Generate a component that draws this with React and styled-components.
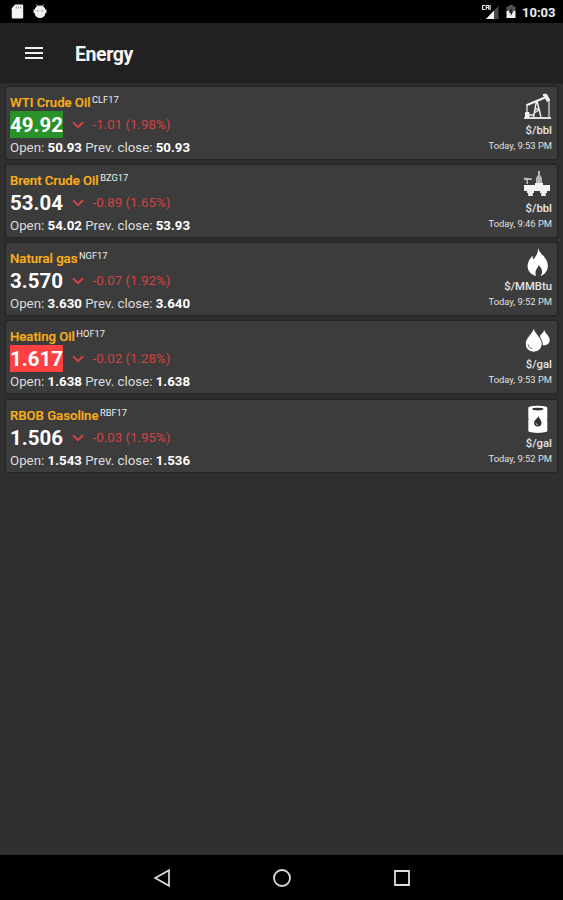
import React from 'react';
import styled, { createGlobalStyle } from 'styled-components';

const GlobalStyle = createGlobalStyle`
  * { box-sizing: border-box; }
  body { margin: 0; background: #303030; font-family: Roboto, "Noto Sans", sans-serif; }
`;

const Screen = styled.div`
  display: flex;
  flex-direction: column;
  height: 900px;
  background: #303030;
  color: #fff;
  overflow: hidden;
`;

const StatusBar = styled.header`
  display: flex;
  align-items: center;
  height: 23px;
  flex: none;
  padding: 0 7px 0 10px;
  background: #000;
`;

const StatusIcon = styled.svg`
  display: block;
  flex: none;
  margin-left: ${(p) => p.$gap || 0}px;
`;

const Clock = styled.time`
  margin-left: 6px;
  width: 34px;
  font-size: 13px;
  font-weight: 700;
  line-height: 23px;
  padding-top: 2px;
  white-space: nowrap;
  color: #eee;
`;

const Spacer = styled.div`
  flex: 1;
`;

const AppBar = styled.nav`
  display: flex;
  align-items: center;
  gap: 32px;
  height: 61px;
  flex: none;
  padding-left: 25px;
  background: #212121;
  border-bottom: 1px solid #272727;
`;

const MenuIcon = styled.svg`
  display: block;
  margin-top: -1px;
`;

const Title = styled.h1`
  margin: 2px 0 0;
  font-size: 19.5px;
  font-weight: 700;
  letter-spacing: -0.4px;
  color: #f5f5f5;
`;

const List = styled.main`
  flex: 1;
  display: flex;
  flex-direction: column;
  gap: 6.25px;
  padding: 2.6px 6px 0;
`;

const Card = styled.article`
  display: flex;
  justify-content: space-between;
  height: 72px;
  padding: 0 5px 0 4px;
  background: #3c3c3c;
  border-radius: 2px;
  box-shadow: 0 0 2px 1px rgba(0, 0, 0, 0.3);
`;

const Quote = styled.div`
  display: flex;
  flex-direction: column;
  white-space: nowrap;
`;

const NameRow = styled.div`
  display: flex;
  height: 24px;
  padding-top: 7px;
`;

const Name = styled.span`
  font-size: 13.2px;
  line-height: 17px;
  font-weight: 500;
  letter-spacing: -0.03px;
  color: #f9af18;
  -webkit-text-stroke: 0.2px #f9af18;
`;

const Symbol = styled.span`
  margin: -1px 0 0 1.5px;
  font-size: 9.3px;
  line-height: 13px;
  color: #f0f0f0;
`;

const PriceRow = styled.div`
  display: flex;
  align-items: center;
  height: 27px;
`;

const priceColors = { up: '#2a9129', down: '#fb4141' };

const Price = styled.span`
  width: 53px;
  height: 27px;
  padding-top: 1px;
  font-size: 20.5px;
  line-height: 27px;
  font-weight: 700;
  background: ${(p) => priceColors[p.$flash] || 'transparent'};
`;

const Chevron = styled.svg`
  margin: 1px 8.5px 0 9px;
`;

const Change = styled.span`
  font-size: 13.35px;
  color: #d14343;
`;

const Session = styled.div`
  padding-top: 1px;
  font-size: 13.3px;
  line-height: 18px;
  color: #dedede;

  b {
    font-weight: 700;
    color: #fff;
  }
`;

const Meta = styled.div`
  display: flex;
  flex-direction: column;
  align-items: flex-end;
  white-space: nowrap;
`;

const CommodityIcon = styled.svg`
  display: block;
  margin: 5px 0 0;
  flex: none;
`;

const Unit = styled.span`
  height: 15px;
  margin-top: 1px;
  font-size: 11.3px;
  line-height: 15px;
  font-weight: 500;
  color: #e6e6e6;
`;

const Stamp = styled.span`
  margin-top: 1px;
  font-size: 9.4px;
  line-height: 14px;
  color: #e0e0e0;
`;

const NavBar = styled.footer`
  display: flex;
  align-items: center;
  justify-content: center;
  gap: 100px;
  height: 45px;
  flex: none;
  background: #000;
`;

const PumpJack = () => (
  <g fill="none" stroke="#f2f2f2" strokeWidth="1.4">
    <path d="M2 26H29" strokeWidth="1.8" />
    <path d="M4.5 13.2L23 5.5" strokeWidth="2.2" />
    <path d="M21 2.5L24.3 2L27.8 8L25.3 9.5Z" fill="#f2f2f2" strokeWidth="1" />
    <path d="M27 8V25" strokeWidth="1.1" />
    <path d="M14.5 9L11.5 25M15 9L19 25M12.5 17H17M12 21L18 17.5" />
    <path d="M5 13V20" strokeWidth="1.2" />
    <path d="M3.5 20.5H7V25H3.5Z" fill="#f2f2f2" strokeWidth="1" />
    <path d="M7 23H12" />
  </g>
);

const Platform = () => (
  <g fill="#f2f2f2">
    <path d="M2 15H28V21H2Z" />
    <path d="M5 21H12V23H10.8V26H6.2V23H5ZM18 21H25V23H23.8V26H19.2V23H18Z" />
    <path d="M16 1H18V5L20 8V14H14V8L16 5Z" fill="#b5b5b5" />
    <path d="M2 7.5L10 8.5V10H2ZM4.5 9H6V14H4.5Z" fill="#b9b9b9" />
    <path d="M13 13H21V15H13Z" />
  </g>
);

const Flame = () => (
  <path
    fill="#fff"
    transform="translate(1 -.5)"
    d="M15 0C15.8 5 20 7 22.8 11.5C27.5 19 23.5 27 17.5 28.5C20.5 24.5 18.8 21 15.7 17.5C15.8 20 11 22 13 28.5C5.5 26.5 2.5 19.5 6 13C7.2 10.8 8.7 9.6 9 8C9.7 9 10 10.5 10 12C13.4 8.6 15.4 5 15 0Z"
  />
);

const Drops = () => (
  <g fill="#fff" transform="translate(.7 -.3)">
    <path d="M21.5 4C22.5 8 27 10 27 14.5A5.4 5.4 0 0 1 17.5 17.7C18.5 13 17 10.5 17.5 9.5C19.3 8 20.8 6.5 21.5 4Z" />
    <path
      d="M11 2C12.5 8 19.5 12 19.5 18.3A8.5 8.2 0 0 1 2.5 18.3C2.5 12 9.5 8 11 2Z"
      stroke="#3c3c3c"
      strokeWidth="1"
    />
    <path d="M5.2 18.5Q6 22.5 9.5 23.3" fill="none" stroke="#777" strokeWidth="1" />
  </g>
);

const Barrel = () => (
  <g transform="translate(.8 -.2)">
    <path
      fill="#fff"
      d="M5.5 3C5.5 .2 24.5 .2 24.5 3V26C24.5 28.8 5.5 28.8 5.5 26Z"
    />
    <path d="M5 13.5L6 14.5L5 15.5ZM25 13.5L24 14.5L25 15.5Z" fill="#3c3c3c" />
    <ellipse cx="15" cy="4.3" rx="5.8" ry="1.4" fill="#333" />
    <path d="M15.5 11C15.8 13.5 18.7 15 18.7 18A3.7 3.8 0 0 1 11.3 18C11.3 15 15 14 15.5 11Z" fill="#303030" />
    <path d="M13 18Q13.5 20.3 15.3 20.3" fill="none" stroke="#ddd" strokeWidth=".8" />
  </g>
);

const commodities = [
  { name: 'WTI Crude Oil', symbol: 'CLF17', price: '49.92', change: '-1.01 (1.98%)', open: '50.93', close: '50.93', unit: '$/bbl', time: '9:53 PM', flash: 'up', Icon: PumpJack },
  { name: 'Brent Crude Oil', symbol: 'BZG17', price: '53.04', change: '-0.89 (1.65%)', open: '54.02', close: '53.93', unit: '$/bbl', time: '9:46 PM', Icon: Platform },
  { name: 'Natural gas', symbol: 'NGF17', price: '3.570', change: '-0.07 (1.92%)', open: '3.630', close: '3.640', unit: '$/MMBtu', time: '9:52 PM', Icon: Flame },
  { name: 'Heating Oil', symbol: 'HOF17', price: '1.617', change: '-0.02 (1.28%)', open: '1.638', close: '1.638', unit: '$/gal', time: '9:53 PM', flash: 'down', Icon: Drops },
  { name: 'RBOB Gasoline', symbol: 'RBF17', price: '1.506', change: '-0.03 (1.95%)', open: '1.543', close: '1.536', unit: '$/gal', time: '9:52 PM', Icon: Barrel },
];

const CommodityCard = ({ item }) => (
  <Card>
    <Quote>
      <NameRow>
        <Name>{item.name}</Name>
        <Symbol>{item.symbol}</Symbol>
      </NameRow>
      <PriceRow>
        <Price $flash={item.flash}>{item.price}</Price>
        <Chevron width="12" height="8" viewBox="0 0 12 8">
          <path d="M1 1.2L6 6.2L11 1.2" fill="none" stroke="#d14343" strokeWidth="2" />
        </Chevron>
        <Change>{item.change}</Change>
      </PriceRow>
      <Session>
        Open: <b>{item.open}</b> Prev. close: <b>{item.close}</b>
      </Session>
    </Quote>
    <Meta>
      <CommodityIcon width="30" height="30" viewBox="0 0 30 30">
        <item.Icon />
      </CommodityIcon>
      <Unit>{item.unit}</Unit>
      <Stamp>Today, {item.time}</Stamp>
    </Meta>
  </Card>
);

export default function App() {
  return (
    <Screen>
      <GlobalStyle />
      <StatusBar>
        <StatusIcon width="14" height="15" viewBox="0 0 14 15">
          <path d="M5 .5H12Q13.2 .5 13.2 1.7V13.3Q13.2 14.5 12 14.5H3Q1.8 14.5 1.8 13.3V4.3Z" fill="#f2f2f2" />
          <path d="M6.3 2.3V4.5M8.5 2.3V4.5M10.7 2.3V4.5" stroke="#999" strokeWidth="1.1" />
        </StatusIcon>
        <StatusIcon $gap={9} width="14" height="15" viewBox="0 0 14 15">
          <path d="M3.5 .5L5 3M10.5 .5L9 3" stroke="#ddd" strokeWidth="1" />
          <path d="M1.5 6.5A5.5 5 0 0 1 12.5 6.5V8.5A5.5 5.5 0 0 1 1.5 8.5ZM.5 5.5H1.5V9H.5ZM12.5 5.5H13.5V9H12.5Z" fill="#eee" />
          <path d="M4 7H5.7M8.3 7H10" stroke="#888" strokeWidth="1.2" />
        </StatusIcon>
        <Spacer />
        <StatusIcon width="18" height="16" viewBox="0 0 18 16">
          <path d="M17.5 2V15H5Z" fill="#4a4a4a" />
          <path d="M13 6.5V15H5Z" fill="#f2f2f2" />
          <path d="M4 1.5H1.6V5.5H4M5.2 5.8V1.5H7.5V3.5H5.2M7.7 3.5V5.8M9.2 1V6" fill="none" stroke="#ddd" strokeWidth="1.2" />
        </StatusIcon>
        <StatusIcon $gap={7} width="10" height="15" viewBox="0 0 10 15">
          <path d="M3 1H7V2.5H9.5V7H.5V2.5H3Z" fill="#555" />
          <path d="M.5 7H9.5V14H.5Z" fill="#f2f2f2" />
          <path d="M5.5 4L2.8 8.8H4.7V12L7.4 7.3H5.5Z" fill="#111" />
        </StatusIcon>
        <Clock>10:03</Clock>
      </StatusBar>
      <AppBar>
        <MenuIcon width="18" height="14" viewBox="0 0 18 14">
          <path d="M0 2H18M0 7H18M0 12H18" stroke="#f2f2f2" strokeWidth="2" />
        </MenuIcon>
        <Title>Energy</Title>
      </AppBar>
      <List>
        {commodities.map((item) => (
          <CommodityCard key={item.symbol} item={item} />
        ))}
      </List>
      <NavBar>
        <svg width="20" height="20" viewBox="0 0 20 20">
          <path d="M17 2.2V17.8L3.2 10Z" fill="none" stroke="#ddd" strokeWidth="1.7" />
        </svg>
        <svg width="20" height="20" viewBox="0 0 20 20">
          <circle cx="10" cy="10" r="8" fill="none" stroke="#ddd" strokeWidth="1.8" />
        </svg>
        <svg width="20" height="20" viewBox="0 0 20 20">
          <path d="M3 3H17V17H3Z" fill="none" stroke="#ddd" strokeWidth="1.8" />
        </svg>
      </NavBar>
    </Screen>
  );
}
